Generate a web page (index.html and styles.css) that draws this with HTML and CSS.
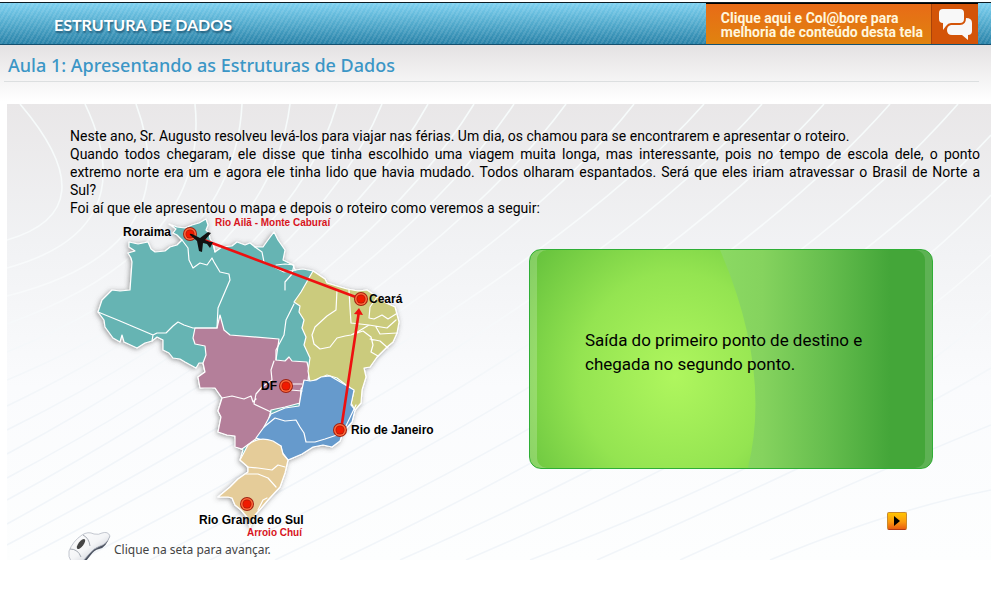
FILE: index.html
```html
<!DOCTYPE html>
<html lang="pt-BR">
<head>
<meta charset="utf-8">
<title>Estrutura de Dados</title>
<link rel="stylesheet" href="styles.css">
</head>
<body>
<header class="topbar">
  <p class="course">ESTRUTURA DE DADOS</p>
  <a class="collab" href="#">
    <span class="collab-text">Clique aqui e Col@bore para<br>melhoria de conteúdo desta tela</span>
    <span class="collab-icon">
      <svg width="36" height="36" viewBox="0 0 36 36" aria-hidden="true">
        <path fill="#f8f8f8" d="M6 3h17q4 0 4 4v6q0 4-4 4H14q-3 0-5 3l-3 4V17Q2 17 2 13V7q0-4 4-4z"/>
        <path fill="#f8f8f8" d="M29 12q6 0 6 5v8q0 4-4 4v5l-6-5H15q-5 0-5-5 0-4 4-5h9q6 0 6-7z"/>
      </svg>
    </span>
  </a>
</header>
<h1 class="lesson">Aula 1: Apresentando as Estruturas de Dados</h1>
<main class="panel">
  <svg class="rays" viewBox="7 104 984 456" preserveAspectRatio="xMinYMin slice" aria-hidden="true">
    <defs><linearGradient id="ray" gradientUnits="userSpaceOnUse" x1="0" y1="104" x2="0" y2="560"><stop offset="0" stop-color="#f6fbfb"/><stop offset=".4" stop-color="#f8fafb"/><stop offset=".7" stop-color="#f1f5f9"/><stop offset="1" stop-color="#f1f5f9"/></linearGradient></defs>
    <g fill="none" stroke="url(#ray)" stroke-width="1.600">
      <path d="M20 104Q110 210 7 240M85 104Q145 230 7 268M136 104Q190 250 7 296M195 104Q210 250 7 324M242 104Q235 260 7 352M290 104Q270 270 7 380M337 104Q290 270 7 406M382 104Q310 280 7 430M428 104Q330 280 7 454M474 104Q360 290 7 478M514 104Q390 290 7 500M566 104Q430 290 7 524M634 104Q490 290 7 545M704 104Q540 290 20 560M762 104Q590 300 80 560M824 104Q640 310 150 560M890 104Q700 320 210 560M958 104Q760 330 275 560M991 135Q800 340 340 560M991 195Q830 370 400 560M991 255Q840 400 466 560M991 310Q870 430 530 560M991 368Q870 440 597 560M991 425Q880 470 680 560M991 490Q890 510 770 560"/>
    </g>
  </svg>
  <div class="story">
    <p>Neste ano, Sr. Augusto resolveu levá-los para viajar nas férias. Um dia, os chamou para se encontrarem e apresentar o roteiro.</p>
    <p><span class="full">Quando todos chegaram, ele disse que tinha escolhido uma viagem muita longa, mas interessante, pois no tempo de escola dele, o ponto</span> <span class="full">extremo norte era um e agora ele tinha lido que havia mudado. Todos olharam espantados. Será que eles iriam atravessar o Brasil de Norte a</span> Sul?</p>
    <p>Foi aí que ele apresentou o mapa e depois o roteiro como veremos a seguir:</p>
  </div>
  <div class="stage">
    <svg class="map" width="390" height="324" viewBox="70 217 390 324" role="img" aria-label="Mapa do Brasil">
      <defs>
        <filter id="shade" x="-10%" y="-10%" width="120%" height="120%"><feDropShadow dx="-1" dy="1" stdDeviation="2.5" flood-color="#555" flood-opacity=".6"/></filter>
        <g id="pin"><circle r="7" fill="#a02010"/><circle r="6" fill="#ff6a3c"/><circle r="4.500" fill="#a81a08"/><circle r="3.800" fill="#f01a00"/></g>
      </defs>
      <g stroke="#fff" stroke-width="1.200" stroke-linejoin="round" stroke-linecap="round">
        <path filter="url(#shade)" fill="#66b4b3" d="M169 224L177 227 185 228 192 225 199 223 206 219 208 225 206 230 209 233 210 239 213 243 215 252 222 247 232 246 237 242 245 245 250 243 255 247 263 247 268 240 274 232 278 240 285 250 283 260 293 265 295 270 303 269 313 271 325 279 327 283 340 287 347 289 358 291 367 290 377 297 386 303 395 307 399 322 397 333 393 342 387 347 377 357 370 367 364 368 366 377 362 390 361 403 355 410 352 422 343 432 340 441 332 447 323 445 313 447 302 454 293 458 288 460 285 473 280 487 268 500 262 507 255 515 250 527 247 517 241 510 235 505 232 498 228 497 218 497 230 487 238 479 248 472 248 467 240 460 243 450 237 447 235 436 227 435 218 432 221 417 218 411 222 398 215 388 208 387 200 388 198 377 205 372 203 363 199 363 196 368 185 362 180 359 173 358 169 353 163 350 163 340 157 337 152 341 145 343 137 348 124 342 122 335 120 342 113 338 105 327 104 320 98 312 102 300 112 290 120 291 130 290 132 262 131 258 128 253 135 251 129 247 129 242 138 244 148 242 151 249 155 252 165 251 170 247 177 245 182 240 177 235 173 233 176 229z"/>
        <path fill="#b47f9a" d="M195 328H217L220 315 224 330 230 335 279 339 276 360 285 361 289 357 292 361 307 362 309 371 308 381 301 389 300 403 285 407 271 410 268 422 257 438 242 449 235 447 235 436 227 435 218 432 221 417 218 411 222 398 215 388 200 388 198 377 205 372 203 363 206 355 205 346 195 344 193 338z"/>
        <path fill="#cbcb7d" d="M313 271L325 279 327 283 340 287 347 289 358 291 367 290 377 297 386 303 395 307 399 322 397 333 393 342 387 347 377 357 370 367 364 368 366 377 362 390 361 403 355 410 351 403 354 391 337 378 327 375 310 382 308 371 310 358 304 345 306 337 302 328 304 320 299 312 300 306 294 302 301 292z"/>
        <path fill="#669acc" d="M302 389L304 380 310 381 316 380 321 377 330 376 342 383 354 390 351 405 355 410 352 422 343 432 340 441 332 447 323 445 313 447 302 454 288 460 282 452 281 446 256 438 264 427 271 414 285 408 299 406z"/>
        <path fill="#e5cc99" d="M248 445Q258 436 273 441L281 446 283 454 288 460 285 473 280 487 268 500 262 507 255 515 250 527 247 517 241 510 235 505 232 498 228 497 218 497 230 487 238 479 248 472 248 467 240 460z"/>
        <g fill="none">
          <path d="M98 312L120 321 153 335 157 333 166 333 173 326 178 322 184 325 193 328H217L218 308 230 280 229 274 220 272 214 262 212 258 207 265 200 263 193 268 189 260 188 248 182 240M213 243L215 252M153 335L152 341M255 247L262 252 264 262 276 268 284 272 296 270M276 265L285 264 294 265 292 274 285 282 285 290M276 360L276 350 284 335 286 320 294 304M337 290L336 310 327 316 315 327 312 335 314 344 320 349 330 347 337 338 345 336 351 335 359 331 369 325 387 328 396 320M349 290L350 308 351 323 369 325M377 297L370 307 369 318 374 319 382 315 388 319 396 314M351 335L363 331 371 337 373 345 371 352 378 356M370 339L380 341 388 348M376 327L380 334 397 333M274 361L271 370 272 380 262 387 256 394 254 404 271 412M222 398L232 396 244 399 251 396 253 402 256 399M291 384H302M291 390L302 391M264 427L275 418 285 421 296 420 300 427 304 433 306 442 315 442 325 439 340 434M343 432L356 405M247 467L258 468 272 470 278 465 285 467M246 474L258 474 268 478 276 487M258 510L263 500 267 498"/>
        </g>
      </g>
      <g stroke="#ee1010" stroke-width="2.600" fill="#ee1010">
        <path d="M341 430L359 311M361 299L204 240"/>
        <path stroke="none" d="M359 308L363 315 354 314z"/>
      </g>
      <use href="#pin" x="190" y="234"/><use href="#pin" x="361" y="299"/><use href="#pin" x="286" y="386"/><use href="#pin" x="340" y="430"/><use href="#pin" x="247" y="504"/>
      <path fill="#111" d="M190 235Q189 233 192 234L200 238 208 232 211 233 205 240 210 242 213 242 210 248 207 244 203 243 202 252 199 251 197 241z"/>
      <g class="place">
        <text x="123" y="236">Roraima</text><text x="369" y="303">Ceará</text><text x="261" y="390">DF</text><text x="351" y="434">Rio de Janeiro</text><text x="199" y="524">Rio Grande do Sul</text>
      </g>
      <g class="extreme"><text x="215" y="226">Rio Ailã - Monte Caburaí</text><text x="247" y="536">Arroio Chuí</text></g>
    </svg>
    <section class="side">
      <div class="card">
        <svg class="gloss" viewBox="0 0 404 220" preserveAspectRatio="none" aria-hidden="true">
          <defs><linearGradient id="sheen" x1="0" y1="0" x2="1" y2="0"><stop offset="0" stop-color="#8bd963"/><stop offset=".2" stop-color="#85d35e"/><stop offset=".5" stop-color="#66be4e"/><stop offset=".8" stop-color="#44a639"/><stop offset="1" stop-color="#44a639"/></linearGradient></defs>
          <path fill="url(#sheen)" d="M191 0Q243 122 219 220H404V0z"/>
        </svg>
        <p>Saída do primeiro ponto de destino e chegada no segundo ponto.</p>
      </div>
      <button class="next" type="button" aria-label="Avançar"><svg width="6" height="10" viewBox="0 0 6 10" aria-hidden="true"><path d="M0 0L6 5 0 10z"/></svg></button>
    </section>
  </div>
  <p class="hint">
    <svg width="44" height="30" viewBox="0 0 44 30" aria-hidden="true">
      <defs><linearGradient id="shell" x1="0" y1="0" x2="1" y2="1"><stop offset="0" stop-color="#fff"/><stop offset=".5" stop-color="#f4f5f7"/><stop offset="1" stop-color="#b4b9c4"/></linearGradient></defs>
      <path fill="#4d5462" d="M2 24L12 12 42 5Q38 17 31 18 26 19 22 25L18 30H3z"/>
      <path fill="url(#shell)" stroke="#b5bac4" stroke-width=".8" d="M1 20Q5 10 14 4 20 0 26 3 31 4 34 2 40 0 42 5 39 13 32 15 26 17 21 23L15 30H3Q0 26 1 20z"/>
      <path fill="none" stroke="#8f95a0" stroke-width=".8" d="M2 18Q10 18 13 26M15 4Q21 7 22 15"/>
      <ellipse cx="13" cy="13" rx="2.500" ry="6" transform="rotate(38 13 13)" fill="#454545"/>
    </svg>
    <span>Clique na seta para avançar.</span>
  </p>
</main>
</body>
</html>
```
FILE: styles.css
```css
* { box-sizing: border-box; }
body {
  margin: 0;
  padding-top: 2px;
  background: linear-gradient(#fff 2px, #e4e2e3 45px, #fff 102px) no-repeat;
  font-family: Roboto, sans-serif;
  color: #000;
}
p, h1 { margin: 0; }
.topbar {
  display: flex;
  justify-content: space-between;
  height: 43px;
  padding-right: 13px;
  border-top: 1px solid #0b1a22;
  border-bottom: 1px solid #14506f;
  background:
    repeating-linear-gradient(120deg, rgba(255,255,255,.1) 0 2px, transparent 2px 4px),
    linear-gradient(#7dd0f0, #53abcd 50%, #2982a8);
}
.course {
  padding-left: 54px;
  font: bold 16px/44px Lato, sans-serif;
  color: #fff;
  text-shadow: 1px 2px 2px #205a78;
}
.collab {
  display: flex;
  border-top: 1px solid #000;
  background: linear-gradient(#e86b17, #e0830f);
  color: #fff6dd;
  text-decoration: none;
}
.collab-text {
  padding: 7px 8px 0 15px;
  font: bold 14px/14px Roboto, sans-serif;
}
.collab-icon {
  display: flex;
  align-items: center;
  justify-content: center;
  width: 47px;
  border-left: 1px solid #a9430a;
  background: #d35408;
}
.lesson {
  height: 37px;
  margin: 0 12px 22px 4px;
  padding-left: 4px;
  border-bottom: 1px solid #dcdfe0;
  font: 500 18px/41px "Noto Sans", sans-serif;
  color: #3b96c6;
}
.panel {
  position: relative;
  margin-left: 7px;
  padding: 23px 0 0 63px;
  background: linear-gradient(#e9e7e8, #f1f2f4 30%, #fafbfd 62%, #fdfefe);
  overflow: hidden;
}
.rays { position: absolute; inset: 0; width: 100%; height: 100%; }
.story, .stage, .hint { position: relative; }
.story {
  padding-right: 11px;
  font-size: 14px;
  line-height: 18px;
}
.full { display: block; text-align: justify; text-align-last: justify; }
.stage { display: flex; gap: 69px; }
.map { flex: none; margin-bottom: -9px; overflow: visible; }
.place { font: bold 12px "Liberation Sans", sans-serif; fill: #000; }
.extreme { font: bold 10px "Liberation Sans", sans-serif; fill: #d8141c; }
.side {
  flex: 1;
  display: flex;
  flex-direction: column;
  align-items: flex-end;
  gap: 43px;
  padding: 32px 58px 0 0;
}
.card {
  position: relative;
  display: flex;
  align-items: center;
  width: 100%;
  min-height: 220px;
  padding: 0 54px 14px 55px;
  border: 1px solid #2fae35;
  border-radius: 12px;
  background: radial-gradient(ellipse 240px 260px at 36% 58%, #aff65e, #94e451 40%, #66c23d 75%, #42a538);
  overflow: hidden;
  font-size: 17px;
  line-height: 24px;
}
.card::after {
  content: "";
  position: absolute;
  inset: 0;
  border-radius: 10px;
  box-shadow: inset 7px 0 0 rgba(255,255,255,.2), inset -7px 0 0 rgba(255,255,255,.14);
}
.card p { position: relative; }
.gloss { position: absolute; inset: 0; width: 100%; height: 100%; }
.next {
  display: flex;
  align-items: center;
  justify-content: center;
  width: 20px;
  height: 18px;
  margin-right: 26px;
  padding: 0;
  border: 1px solid #c98a2c;
  border-bottom-color: #b33a12;
  border-radius: 2px;
  background: linear-gradient(#ffc400, #fb9a10 55%, #ea5e10);
}
.hint {
  display: flex;
  align-items: center;
  gap: 2px;
  height: 28px;
  margin-left: -2px;
  font: 12px/28px "Noto Sans", sans-serif;
  color: #444;
}
.hint svg { flex: none; }
.hint span { padding-top: 8px; }
```
